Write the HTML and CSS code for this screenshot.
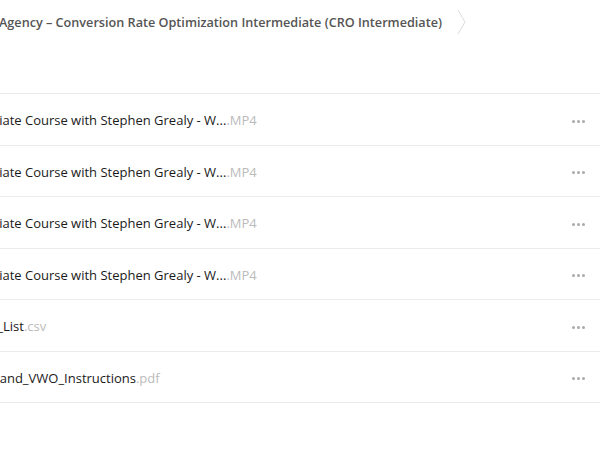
FILE: index.html
```html
<!DOCTYPE html>
<html lang="en">
<head>
  <meta charset="UTF-8" />
  <title>Files</title>
  <link rel="stylesheet" href="styles.css">
</head>
<body>
  <div class="page">
    <div class="crumbs">
      <span class="crumb">Agency – Conversion Rate Optimization Intermediate (CRO Intermediate)</span>
      <svg class="chevron" width="10" height="26" viewBox="0 0 10 26">
        <path d="M1 1 L8 13 L1 25" fill="none" stroke="#ddd" stroke-width="1"/>
      </svg>
    </div>

    <ul class="files">
      <li class="file">
        <span class="name">Intermediate Course with Stephen Grealy - W...<span class="ext">.MP4</span></span>
        <span class="more"><i></i><i></i><i></i></span>
      </li>
      <li class="file">
        <span class="name">Intermediate Course with Stephen Grealy - W...<span class="ext">.MP4</span></span>
        <span class="more"><i></i><i></i><i></i></span>
      </li>
      <li class="file">
        <span class="name">Intermediate Course with Stephen Grealy - W...<span class="ext">.MP4</span></span>
        <span class="more"><i></i><i></i><i></i></span>
      </li>
      <li class="file">
        <span class="name">Intermediate Course with Stephen Grealy - W...<span class="ext">.MP4</span></span>
        <span class="more"><i></i><i></i><i></i></span>
      </li>
      <li class="file">
        <span class="name csv">Test_List<span class="ext">.csv</span></span>
        <span class="more"><i></i><i></i><i></i></span>
      </li>
      <li class="file">
        <span class="name pdf">Setup_and_VWO_Instructions<span class="ext">.pdf</span></span>
        <span class="more"><i></i><i></i><i></i></span>
      </li>
    </ul>
  </div>
</body>
</html>
```

FILE: styles.css
```css
body {
  margin: 0;
  background: #fff;
  font-family: 'Open Sans', sans-serif;
  overflow: hidden;
}

.page {
  width: 600px;
}

.crumbs {
  display: flex;
  align-items: center;
  height: 43px;
  margin-left: -1px;
}

.crumb {
  font-size: 12.65px;
  font-weight: 600;
  color: #555;
  white-space: nowrap;
}

.chevron {
  margin-left: 15px;
  flex-shrink: 0;
}

.files {
  list-style: none;
  margin: 50px 0 0;
  padding: 0;
  border-top: 1px solid #ebebeb;
}

.file {
  display: flex;
  align-items: center;
  justify-content: space-between;
  height: 50.5px;
  border-bottom: 1px solid #ebebeb;
}

.name {
  font-size: 13px;
  color: #1a1a1a;
  white-space: nowrap;
  margin-left: -57px;
  padding-top: 2px;
}

.name.csv {
  margin-left: -28px;
}

.name.pdf {
  margin-left: -41px;
}

.ext {
  color: #bbb;
}

.more {
  display: flex;
  gap: 2px;
  margin-right: 15px;
  padding-top: 4px;
}

.more i {
  width: 3px;
  height: 3px;
  border-radius: 50%;
  background: #aaa;
}
```
